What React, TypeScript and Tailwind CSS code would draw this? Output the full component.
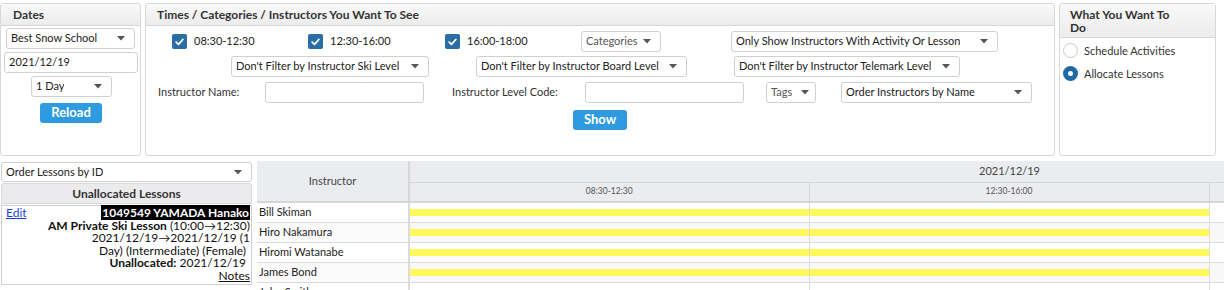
import React from "react";

const Caret = () => (
  <svg width="8" height="5" viewBox="0 0 8 5" className="shrink-0">
    <path d="M0 0 L8 0 L4 4.5 Z" fill="#555" />
  </svg>
);

const Select = ({ label, className = "", muted = false }: { label: string; className?: string; muted?: boolean }) => (
  <div
    className={`flex items-center justify-between h-[21px] border border-[#d0d0d0] rounded-[3px] bg-white pl-[4px] pr-[9px] text-[11px] ${muted ? "text-[#555]" : "text-[#222]"} ${className}`}
  >
    <span className="whitespace-nowrap overflow-hidden">{label}</span>
    <Caret />
  </div>
);

const Check = ({ label }: { label: string }) => (
  <div className="flex items-center gap-[7px] text-[11px] text-[#222]">
    <div className="w-[15px] h-[15px] rounded-[2px] bg-[#2b6ea6] flex items-center justify-center">
      <svg width="9" height="8" viewBox="0 0 9 8">
        <path d="M1.2 4.2 L3.5 6.3 L7.8 1.5" stroke="white" strokeWidth="1.8" fill="none" strokeLinecap="round" strokeLinejoin="round" />
      </svg>
    </div>
    <span>{label}</span>
  </div>
);

const PanelHeader = ({ children, className = "" }: { children: React.ReactNode; className?: string }) => (
  <div className={`bg-gradient-to-b from-[#f9f9f9] to-[#ececec] border-b border-[#d6d6d6] text-[12px] font-bold text-[#333] rounded-t-[3px] ${className}`}>
    {children}
  </div>
);

const Button = ({ label, className = "" }: { label: string; className?: string }) => (
  <div className={`h-[20px] rounded-[3px] bg-[#2e9be0] text-white text-[13px] font-bold flex items-center justify-center ${className}`}>
    {label}
  </div>
);

const Input = ({ value = "", className = "" }: { value?: string; className?: string }) => (
  <div className={`h-[21px] border border-[#d0d0d0] rounded-[3px] bg-white px-[4px] text-[11px] text-[#222] flex items-center ${className}`}>
    {value}
  </div>
);

const instructors = ["Bill Skiman", "Hiro Nakamura", "Hiromi Watanabe", "James Bond", "John Smith"];

export default function App() {
  return (
    <div className="w-[1224px] h-[290px] overflow-hidden bg-white text-[#222]" style={{ fontFamily: "Lato, 'Open Sans', sans-serif" }}>
      {/* Top panels */}
      <div className="flex pt-[3px] gap-[4px]">
        {/* Dates */}
        <div className="w-[141px] h-[153px] border border-[#d8d8d8] rounded-[3px] flex flex-col shrink-0">
          <PanelHeader className="h-[22px] flex items-center pl-[12px]">Dates</PanelHeader>
          <div className="flex flex-col">
            <Select label="Best Snow School" className="ml-[5px] w-[129px] mt-[2px]" />
            <Input value="2021/12/19" className="ml-[3px] w-[134px] mt-[3px]" />
            <Select label="1 Day" className="ml-[30px] w-[81px] mt-[3px]" />
            <Button label="Reload" className="ml-[39px] w-[62px] mt-[6px]" />
          </div>
        </div>

        {/* Times / Categories */}
        <div className="w-[910px] h-[153px] border border-[#d8d8d8] rounded-[3px] flex flex-col shrink-0">
          <PanelHeader className="h-[22px] flex items-center pl-[11px]">Times / Categories / Instructors You Want To See</PanelHeader>
          <div className="flex items-center mt-[5px] pl-[26px] h-[21px]">
            <div className="w-[136px]"><Check label="08:30-12:30" /></div>
            <div className="w-[137px]"><Check label="12:30-16:00" /></div>
            <div className="w-[136px]"><Check label="16:00-18:00" /></div>
            <Select label="Categories" muted className="w-[80px] shrink-0" />
            <Select label="Only Show Instructors With Activity Or Lesson" className="ml-[70px] w-[267px] shrink-0" />
          </div>
          <div className="flex items-center mt-[4px]">
            <Select label="Don't Filter by Instructor Ski Level" className="ml-[85px] w-[198px] shrink-0" />
            <Select label="Don't Filter by Instructor Board Level" className="ml-[47px] w-[211px] shrink-0" />
            <Select label="Don't Filter by Instructor Telemark Level" className="ml-[47px] w-[226px] shrink-0" />
          </div>
          <div className="flex items-center mt-[5px]">
            <div className="ml-[12px] w-[107px] text-[11px] text-[#333]">Instructor Name:</div>
            <Input className="w-[159px] shrink-0" />
            <div className="ml-[28px] w-[133px] text-[11px] text-[#333]">Instructor Level Code:</div>
            <Input className="w-[159px] shrink-0" />
            <Select label="Tags" muted className="ml-[22px] w-[50px] shrink-0 !pr-[6px]" />
            <Select label="Order Instructors by Name" className="ml-[25px] w-[191px] shrink-0" />
          </div>
          <Button label="Show" className="ml-[427px] w-[54px] mt-[7px]" />
        </div>

        {/* What You Want To Do */}
        <div className="w-[157px] h-[153px] border border-[#d8d8d8] rounded-[3px] flex flex-col shrink-0">
          <PanelHeader className="h-[34px] flex items-center pl-[10px] leading-[13px]">
            <span className="w-[115px]">What You Want To Do</span>
          </PanelHeader>
          <div className="flex items-center gap-[6px] mt-[5px] ml-[3px] text-[11px] leading-[15px] text-[#333]">
            <div className="w-[15px] h-[15px] rounded-full border border-[#c8c8c8] bg-white" />
            <span>Schedule Activities</span>
          </div>
          <div className="flex items-center gap-[6px] mt-[8px] ml-[3px] text-[11px] leading-[15px] text-[#333]">
            <div className="w-[15px] h-[15px] rounded-full bg-[#1f6aa5] flex items-center justify-center">
              <div className="w-[5px] h-[5px] rounded-full bg-white" />
            </div>
            <span>Allocate Lessons</span>
          </div>
        </div>
      </div>

      {/* Bottom */}
      <div className="flex mt-[5px]">
        {/* Left column */}
        <div className="w-[251px] ml-[1px] shrink-0 flex flex-col">
          <Select label="Order Lessons by ID" className="w-[251px] !h-[20px] mt-[1px]" />
          <div className="h-[21px] mt-[1px] bg-[#ebebee] border border-[#d8d8d8] rounded-t-[3px] flex items-center justify-center text-[12px] font-bold text-[#333]">
            Unallocated Lessons
          </div>
          <div className="mt-[1px] h-[80px] border border-[#cfcfcf] pl-[4px] pr-[1px] pt-[1px] text-[12px] leading-[12.6px] text-[#111]">
            <a className="float-left text-[#1a3fe0] underline h-[12.6px]">Edit</a>
            <div className="text-right">
              <div className="h-[12.6px]"><span className="bg-black text-white font-bold px-[1px]">1049549 YAMADA Hanako</span></div>
              <div className="h-[12.6px]"><span className="font-bold">AM Private Ski Lesson</span> (10:00→12:30)</div>
              <div className="h-[12.6px] whitespace-nowrap">2021/12/19→2021/12/19 (1</div>
              <div className="h-[12.6px] pr-[4px]">Day) (Intermediate) (Female)</div>
              <div className="h-[12.6px] pr-[4px]"><span className="font-bold">Unallocated:</span> 2021/12/19</div>
              <div className="h-[12.6px]"><span className="underline">Notes</span></div>
            </div>
          </div>
        </div>

        {/* Grid */}
        <div className="ml-[5px] flex-1 overflow-hidden">
          <table className="border-collapse table-fixed w-[1352px] text-[11px]">
            <colgroup>
              <col className="w-[152px]" />
              <col className="w-[400px]" />
              <col className="w-[400px]" />
              <col className="w-[400px]" />
            </colgroup>
            <thead>
              <tr className="h-[21px]">
                <th rowSpan={2} className="bg-[#ebecef] border-r-2 border-b-2 border-[#d6d6d9] font-normal text-[#444] text-[11px]">Instructor</th>
                <th colSpan={3} className="bg-[#ebecef] border-b border-[#d6d6d9] font-normal text-[#444] text-[11px]">2021/12/19</th>
              </tr>
              <tr className="h-[20px]">
                <th className="bg-[#ebecef] border-r border-b-2 border-[#d6d6d9] font-normal text-[#555] text-[8.5px]">08:30-12:30</th>
                <th className="bg-[#ebecef] border-r border-b-2 border-[#d6d6d9] font-normal text-[#555] text-[8.5px]">12:30-16:00</th>
                <th className="bg-[#ebecef] border-b-2 border-[#d6d6d9] font-normal text-[#555] text-[8.5px]">16:00-18:00</th>
              </tr>
            </thead>
            <tbody>
              {instructors.map((name, i) => (
                <tr key={name} className={`h-[20px] ${i % 2 === 1 ? "bg-[#f8f8f8]" : "bg-white"}`}>
                  <td className={`border-r-2 border-b border-[#dcdcdc] pl-[2px] text-[#222] whitespace-nowrap ${i % 2 === 1 ? "bg-[#fbfbfb]" : "bg-white"}`}>{name}</td>
                  <td className="border-r border-b border-[#dcdcdc] p-0 align-top">
                    {i < 4 && <div className="h-[7px] mt-[6px] bg-[#fff95c]" />}
                  </td>
                  <td className="border-r border-b border-[#dcdcdc] p-0 align-top">
                    {i < 4 && <div className="h-[7px] mt-[6px] bg-[#fff95c]" />}
                  </td>
                  <td className="border-b border-[#dcdcdc] p-0" />
                </tr>
              ))}
            </tbody>
          </table>
        </div>
      </div>
    </div>
  );
}
